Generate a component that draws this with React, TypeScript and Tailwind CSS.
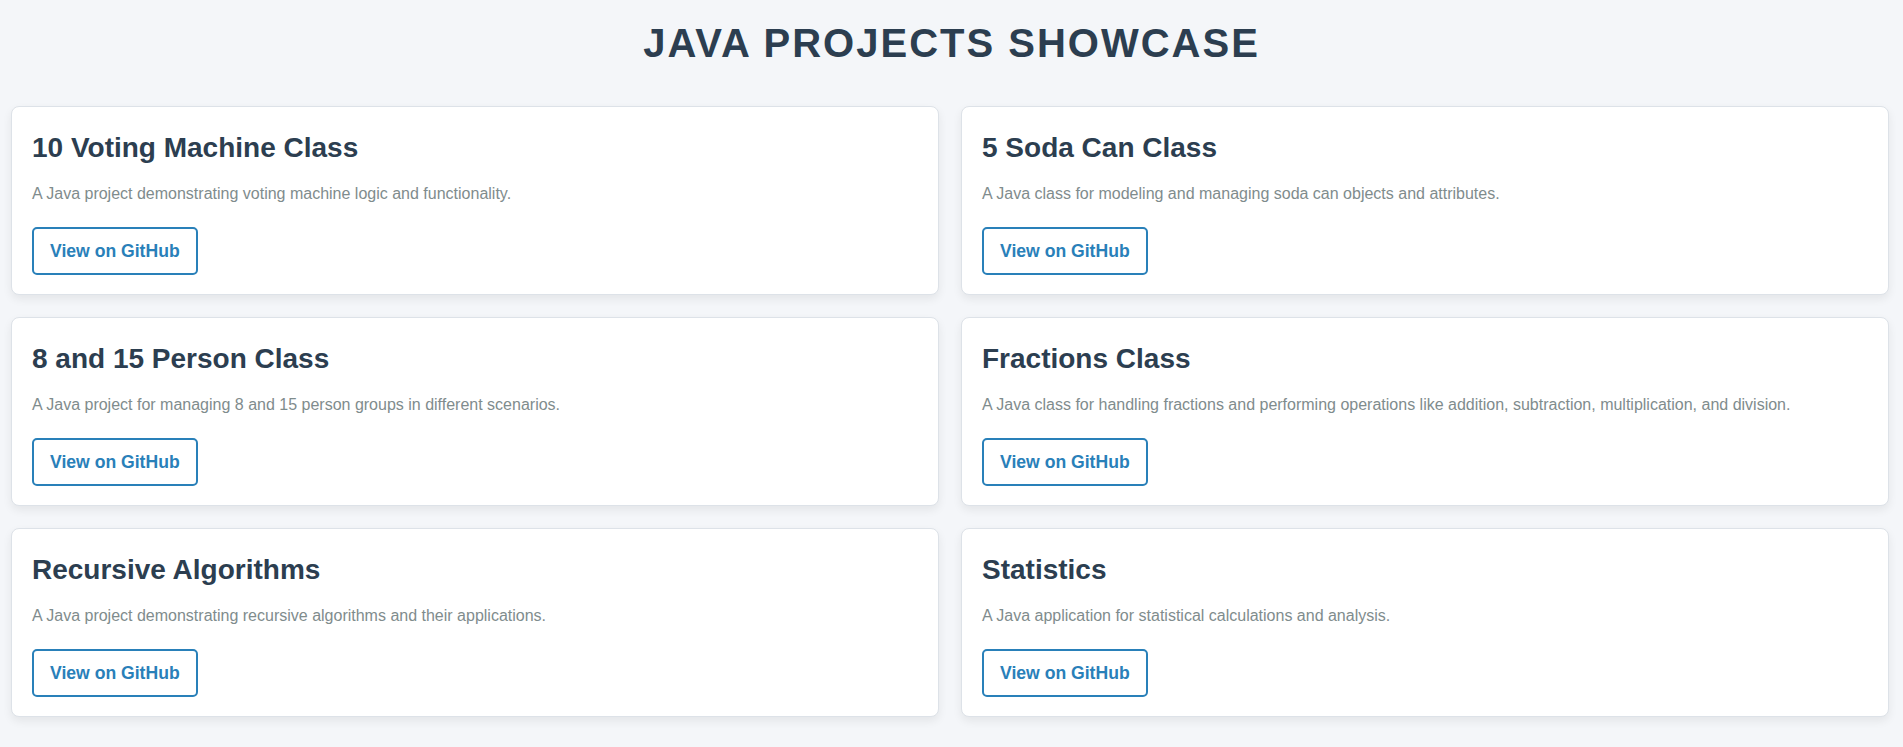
const projects = [
  {
    title: "10 Voting Machine Class",
    description: "A Java project demonstrating voting machine logic and functionality.",
  },
  {
    title: "5 Soda Can Class",
    description: "A Java class for modeling and managing soda can objects and attributes.",
  },
  {
    title: "8 and 15 Person Class",
    description: "A Java project for managing 8 and 15 person groups in different scenarios.",
  },
  {
    title: "Fractions Class",
    description:
      "A Java class for handling fractions and performing operations like addition, subtraction, multiplication, and division.",
  },
  {
    title: "Recursive Algorithms",
    description: "A Java project demonstrating recursive algorithms and their applications.",
  },
  {
    title: "Statistics",
    description: "A Java application for statistical calculations and analysis.",
  },
];

const ProjectCard = ({ title, description }: { title: string; description: string }) => {
  return (
    <div className="bg-white border border-[#dde2e8] rounded-lg shadow-[0_4px_10px_rgba(0,0,0,0.07)] pt-[25px] pb-[19px] px-[20px]">
      <h2 className="text-[28px] leading-[32px] font-bold text-[#2c3e50] mb-[20px]">{title}</h2>
      <p className="text-[16px] leading-[19px] text-[#7f8c8d] mb-[24px]">{description}</p>
      <a
        href="#"
        className="inline-block border-2 border-[#2980b9] rounded-[5px] text-[#2980b9] font-bold text-[17.6px] leading-[20px] py-3 px-4"
      >
        View on GitHub
      </a>
    </div>
  );
};

export default function App() {
  return (
    <div
      className="min-h-screen bg-[#f4f6f9] pt-5 pb-8"
      style={{ fontFamily: '"Liberation Sans", Arial, sans-serif' }}
    >
      <h1 className="text-center text-[40px] leading-[46px] font-bold tracking-[2px] text-[#2c3e50] mb-10">
        JAVA PROJECTS SHOWCASE
      </h1>
      <div className="grid grid-cols-2 gap-x-[22px] gap-y-[22px] pl-[11px] pr-[14px]">
        {projects.map((p) => (
          <ProjectCard key={p.title} title={p.title} description={p.description} />
        ))}
      </div>
    </div>
  );
}
